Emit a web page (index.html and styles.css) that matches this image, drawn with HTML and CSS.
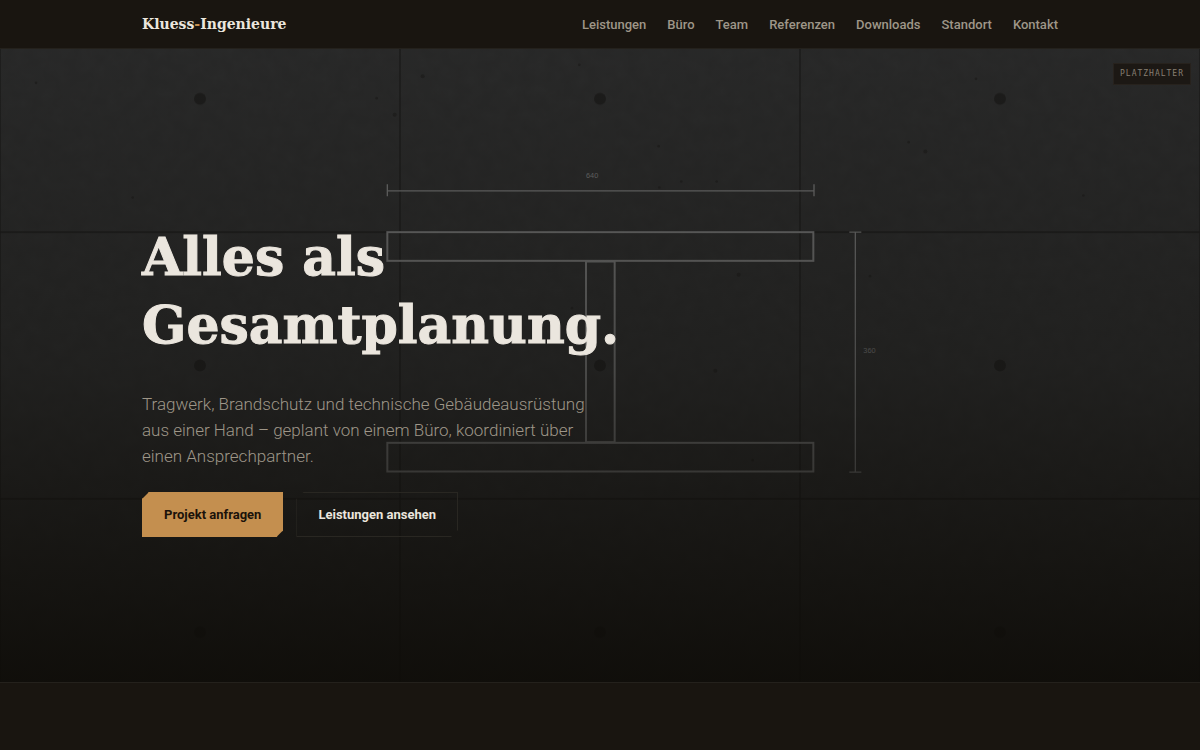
FILE: index.html
```html
<!DOCTYPE html>
<html lang="de">
    <head>
        <meta charset="utf-8">
        <title>Kluess-Ingenieure</title>
        <meta name="viewport" content="width=device-width, initial-scale=1">
        <link rel="stylesheet" href="styles.css">
    </head>
    <body>
        <header class="site-header">
            <div class="container header-row">
                <a class="brand" href="#">Kluess<span>-</span>Ingenieure</a>
                <nav class="main-nav">
                    <a href="#leistungen">Leistungen</a>
                    <a href="#buero">Büro</a>
                    <a href="#team">Team</a>
                    <a href="#referenzen">Referenzen</a>
                    <a href="#downloads">Downloads</a>
                    <a href="#standort">Standort</a>
                    <a href="#kontakt">Kontakt</a>
                </nav>
            </div>
        </header>
        <main>
            <section class="hero">
                <svg class="hero-image" viewBox="0 0 1800 1200" preserveAspectRatio="xMidYMid slice" aria-hidden="true">
                    <defs>
                        <filter id="grain" x="0" y="0" width="100%" height="100%">
                            <feTurbulence type="fractalNoise" baseFrequency="0.05" numOctaves="3" seed="7"/>
                            <feColorMatrix values="0 0 0 0 0  0 0 0 0 0  0 0 0 0 0  0.5 0 0 0 -0.1"/>
                        </filter>
                        <!-- one formwork panel with its tie hole -->
                        <pattern id="panel" width="600" height="400" patternUnits="userSpaceOnUse">
                            <path class="joint" d="M0 0H600M0 400H600M0 0V400M600 0V400"/>
                            <circle class="tie" cx="300" cy="200" r="9"/>
                        </pattern>
                    </defs>
                    <rect class="concrete" width="1800" height="1200"/>
                    <rect class="grain" width="1800" height="1200" filter="url(#grain)"/>
                    <rect width="1800" height="1200" fill="url(#panel)"/>
                    <g class="pits">
                        <circle cx="54" cy="176" r="2"/>
                        <circle cx="565" cy="199" r="2"/>
                        <circle cx="592" cy="224" r="3"/>
                        <circle cx="634" cy="166" r="3"/>
                        <circle cx="869" cy="149" r="2"/>
                        <circle cx="988" cy="271" r="2"/>
                        <circle cx="1388" cy="279" r="3"/>
                        <circle cx="1464" cy="170" r="2"/>
                        <circle cx="1363" cy="265" r="2"/>
                        <circle cx="199" cy="348" r="2"/>
                        <circle cx="1108" cy="464" r="3"/>
                        <circle cx="989" cy="333" r="2"/>
                        <circle cx="1022" cy="324" r="2"/>
                        <circle cx="1075" cy="324" r="2"/>
                        <circle cx="1625" cy="345" r="2"/>
                        <circle cx="1305" cy="466" r="2"/>
                        <circle cx="858" cy="514" r="2"/>
                        <circle cx="1073" cy="608" r="3"/>
                        <circle cx="1129" cy="742" r="2"/>
                    </g>
                    <g class="drawing">
                        <rect x="581" y="400" width="639" height="43"/>
                        <rect x="879" y="444" width="43" height="271"/>
                        <rect x="581" y="716" width="639" height="43"/>
                        <path class="dim" d="M581 338H1221M581 328V346M1221 328V346"/>
                        <path class="dim" d="M1283 400V760M1274 400H1292M1274 760H1292"/>
                        <text x="879" y="319">640</text>
                        <text x="1295" y="581">360</text>
                    </g>
                </svg>
                <small class="badge">Platzhalter</small>
                <div class="container hero-content">
                    <h1>Alles als<br>Gesamtplanung.</h1>
                    <p class="lead">Tragwerk, Brandschutz und technische Gebäudeausrüstung aus einer Hand – geplant von einem Büro, koordiniert über einen Ansprechpartner.</p>
                    <div class="actions">
                        <a class="button primary" href="#kontakt">Projekt anfragen</a>
                        <a class="button secondary" href="#leistungen">Leistungen ansehen</a>
                    </div>
                </div>
            </section>
            <section class="next-section"></section>
        </main>
    </body>
</html>
```

FILE: styles.css
```css
:root {
    --bg: #191510;
    --text: #ebe6de;
    --muted: #9e9688;
    --accent: #c48f4f;
    --line: #24211c;
    --serif: "DejaVu Serif", Georgia, serif;
    --sans: Roboto, Inter, sans-serif;
    --mono: "DejaVu Sans Mono", monospace;
}
* { box-sizing: border-box; margin: 0; padding: 0; }
body { background-color: var(--bg); color: var(--text); font-family: var(--sans); }
a { color: inherit; text-decoration: none; }
.container { width: 100%; max-width: 964px; margin: 0 auto; padding: 0 24px; }

.site-header { background-color: var(--bg); border-bottom: 1px solid var(--line); }
.header-row { display: flex; align-items: center; justify-content: space-between; height: 48px; }
.brand { font-family: var(--serif); font-size: 14px; font-weight: bold; }
.brand span { color: var(--accent); }
.main-nav { display: flex; gap: 21px; color: var(--muted); font-size: 13px; font-weight: 500; }

.hero { position: relative; overflow: hidden; padding: 174px 0 145px; }
.hero::after {
    content: ""; position: absolute; inset: 0;
    background: linear-gradient(to bottom, rgba(19, 18, 15, 0.3), rgba(19, 18, 15, 0.55) 50%, rgba(14, 12, 8, 0.94));
}
.hero-image { position: absolute; inset: 0; width: 100%; height: 100%; }
.concrete { fill: #333435; }
.grain { opacity: 0.2; }
.joint { stroke: #1c1c1c; stroke-width: 2; fill: none; }
.tie { fill: #202020; }
.pits { fill: #252525; }
.drawing { fill: none; stroke: #8c8d8e; stroke-width: 3; }
.drawing .dim { stroke-width: 2; }
.drawing text { fill: #8c8d8e; stroke: none; font: 11px "Liberation Sans", sans-serif; }
.badge {
    position: absolute; z-index: 1; top: 14px; right: 9px;
    padding: 5px 6px; border: 1px solid #27221d; background-color: #1c1814;
    color: #877f72; font: 8px/10px var(--mono); text-transform: uppercase; letter-spacing: 1px;
}
.hero-content { position: relative; z-index: 1; }
h1 { font-family: var(--serif); font-size: 52px; line-height: 68px; font-weight: bold; -webkit-text-stroke: 1px; }
.lead { max-width: 460px; margin-top: 32px; color: var(--muted); font-size: 17px; line-height: 26px; font-weight: 300; }
.actions { display: flex; gap: 13px; margin-top: 23px; }
.button {
    padding: 11px 21px; border: 1px solid var(--accent);
    font-size: 13px; line-height: 21px; font-weight: 700;
    clip-path: polygon(7px 0, 100% 0, 100% calc(100% - 7px), calc(100% - 7px) 100%, 0 100%, 0 7px);
}
.primary { background-color: var(--accent); color: #1b120a; }
.secondary { border-color: #292722; }

.next-section { min-height: 67px; border-top: 1px solid var(--line); }
```
